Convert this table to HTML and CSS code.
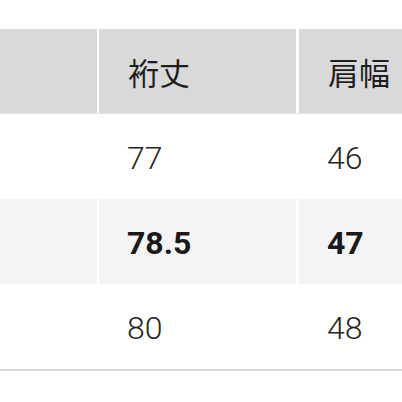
FILE: index.html
```html
<!DOCTYPE html>
<html lang="ja">
<head>
<meta charset="utf-8">
<link rel="stylesheet" href="styles.css">
</head>
<body>
<div class="table">
  <div class="row head">
    <div class="cell c1"></div>
    <div class="cell c2">裄丈</div>
    <div class="cell c3">肩幅</div>
  </div>
  <div class="row">
    <div class="cell c1"></div>
    <div class="cell c2 num">77</div>
    <div class="cell c3 num">46</div>
  </div>
  <div class="row alt">
    <div class="cell c1"></div>
    <div class="cell c2 num bold">78.5</div>
    <div class="cell c3 num bold">47</div>
  </div>
  <div class="row last">
    <div class="cell c1"></div>
    <div class="cell c2 num">80</div>
    <div class="cell c3 num">48</div>
  </div>
</div>
</body>
</html>
```
FILE: styles.css
```css
html, body {
  margin: 0;
  padding: 0;
  background: #fff;
  width: 402px;
  height: 402px;
  overflow: hidden;
}
.table {
  padding-top: 29px;
  font-family: "Noto Sans CJK JP", "Noto Sans", sans-serif;
  color: #1e1e1e;
}
.row {
  display: grid;
  grid-template-columns: 97px 199px 1fr;
  height: 85px;
}
.row.head {
  background: #d9d9d9;
  border-bottom: 1px solid #e2e2e2;
  height: 84px;
}
.row.alt {
  background: #f4f4f4;
}
.row.last {
  border-bottom: 2px solid #dadada;
}
.cell {
  display: flex;
  align-items: center;
  padding-left: 29px;
  font-size: 31px;
}
.c1 {
  padding-left: 0;
}
.c2, .c3 {
  border-left: 2px solid #fff;
}
.c3 {
  border-left-width: 3px;
}
.num {
  font-family: Roboto, "Liberation Sans", sans-serif;
  font-size: 32px;
  font-weight: 300;
  color: #262626;
  padding-top: 3px;
  padding-left: 28px;
}
.num.bold {
  font-weight: 700;
  color: #1a1a1a;
}
```
